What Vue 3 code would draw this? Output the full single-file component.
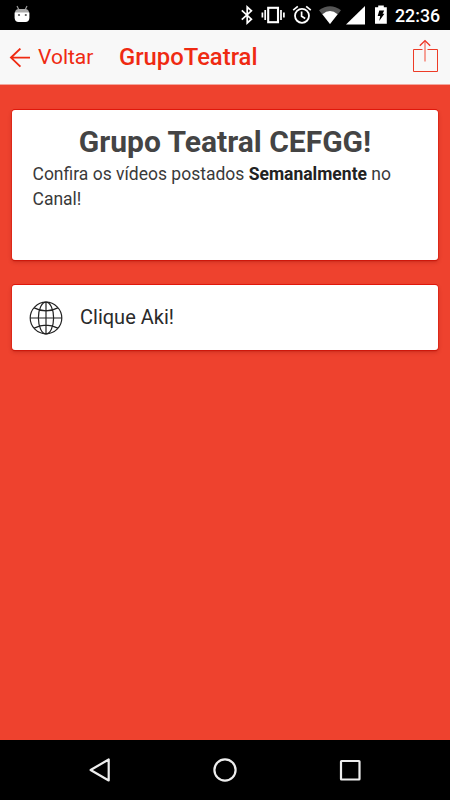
<template>
  <div class="phone">
    <div class="status-bar">
      <svg class="debug" width="16" height="18" viewBox="0 0 16 18">
        <path d="M3 1l2 4M13 1l-2 4" stroke="#999" stroke-width="1.2" />
        <path d="M1 8Q1 4 5 4H11Q15 4 15 8Z" fill="#aaa" />
        <path d="M.6 7.5H15.4V13Q15 17 11.5 17H4.5Q1 17 .6 13Z" fill="#fff" />
        <circle cx="5" cy="10" r="1.1" fill="#555" />
        <circle cx="11.8" cy="10" r="1.1" fill="#555" />
      </svg>
      <svg width="160" height="30" viewBox="230 0 160 30">
        <!-- bluetooth -->
        <path d="M241.8 10.3L251.4 19.2L247.2 23V7L251.4 10.8L241.8 19.7" fill="none" stroke="#fff" stroke-width="1.7" />
        <!-- vibrate -->
        <rect x="268.2" y="7.8" width="9.8" height="14.4" fill="none" stroke="#fff" stroke-width="2.1" />
        <path d="M265.2 10v10M281 10v10M262.4 12.5v5M283.9 12.5v5" stroke="#fff" stroke-width="1.7" />
        <!-- alarm -->
        <circle cx="302" cy="15.8" r="7" fill="none" stroke="#fff" stroke-width="1.8" />
        <path d="M293.2 10.2l4.6-3.8M310.8 10.2l-4.6-3.8M301.6 11.5v4.8l3.6 2.2" fill="none" stroke="#fff" stroke-width="1.7" />
        <!-- wifi -->
        <path d="M319 10.3Q330 2 341 10.3L330 24Z" fill="#555" />
        <path d="M322.4 14.2Q330 8 337.6 14.2L330 24Z" fill="#fff" />
        <!-- signal -->
        <path d="M346 24.5H365V6Z" fill="#fff" />
        <!-- battery -->
        <path d="M375 7.2H378.2V5.4H383.8V7.2H386.8V23.8H375Z" fill="#fff" />
        <path d="M379.3 10.6H384.2L382.6 13.8H384.4L379.2 21L380.2 16H377.7Z" fill="#000" />
      </svg>
      <span class="clock">22:36</span>
    </div>

    <header class="nav-bar">
      <svg class="back" width="22" height="20" viewBox="0 0 22 20">
        <path d="M21 9.6H1.8M11.4 .6L2 9.6L11.4 18.6" fill="none" stroke="#ef2a12" stroke-width="1.9" />
      </svg>
      <span class="back-label">Voltar</span>
      <h1 class="title">GrupoTeatral</h1>
      <svg class="share" width="26" height="34" viewBox="0 0 26 34">
        <path d="M10.5 10.5H1.5V32.5H25.5V10.5H15.5" fill="none" stroke="#ed3b27" />
        <path d="M13 22.5V2" fill="none" stroke="#f58a7d" stroke-width="1.6" />
        <path d="M7.8 6.8L13 1.6L18.2 6.8" fill="none" stroke="#ed3020" stroke-width="1.3" />
      </svg>
    </header>

    <main class="content">
      <section class="card intro">
        <h2>Grupo Teatral CEFGG!</h2>
        <p>
          <span>Confira os vídeos postados <b>Semanalmente</b> no</span>
          <span>Canal!</span>
        </p>
      </section>
      <section class="card link">
        <svg width="34" height="34" viewBox="0 0 34 34" fill="none" stroke="#222" stroke-width="1.2">
          <circle cx="17" cy="17" r="15.8" />
          <ellipse cx="17" cy="17" rx="7.6" ry="15.8" />
          <path d="M17 1.2V32.8M1.2 17H32.8M5.2 6.9Q17 13 28.8 6.9M5.2 27.1Q17 21 28.8 27.1" />
        </svg>
        <span>Clique Aki!</span>
      </section>
    </main>

    <footer class="system-nav">
      <svg width="26" height="26" viewBox="0 0 26 26">
        <path d="M21.7 2.5V23.5L3.6 13Z" />
      </svg>
      <svg width="26" height="26" viewBox="0 0 26 26">
        <circle cx="13" cy="13" r="10.6" />
      </svg>
      <svg width="26" height="26" viewBox="0 0 26 26">
        <rect x="4" y="4" width="18.5" height="18.5" rx="0.5" />
      </svg>
    </footer>
  </div>
</template>

<script setup>
</script>

<style>
body {
  margin: 0;
  background: #000;
}
</style>

<style scoped>
.phone {
  width: 450px;
  height: 800px;
  display: flex;
  flex-direction: column;
  overflow: hidden;
  font-family: Roboto, "Liberation Sans", sans-serif;
  background: #ee422e;
}

.phone svg {
  display: block;
  flex: none;
}

.status-bar {
  display: flex;
  height: 30px;
  background: #000;
}

.debug {
  margin: 5px 200px 0 14px;
}

.clock {
  margin-left: 5px;
  color: #fff;
  font-size: 17.8px;
  font-weight: 500;
  line-height: 31px;
  white-space: nowrap;
}

.nav-bar {
  display: flex;
  align-items: flex-start;
  box-sizing: border-box;
  height: 55px;
  background: #f8f8f8;
  border-bottom: 1px solid #f3a79e;
  color: #ef2a12;
  white-space: nowrap;
}

.back {
  margin: 18px 0 0 9px;
}

.back-label {
  width: 81px;
  padding-left: 7px;
  font-size: 21px;
  line-height: 54px;
}

.title {
  margin: 0;
  flex: 1;
  font-size: 23.8px;
  font-weight: 500;
  line-height: 55px;
}

.share {
  margin: 9px 12px 0 0;
}

.content {
  flex: 1;
  padding: 25px 12px 0;
}

.card {
  box-sizing: border-box;
  background: #fff;
  border-radius: 3px;
  box-shadow: 0 0 0 0.5px #e01a0e, 0 1px 1px #b81408, 0 -1px 0 #e01408, 0 2px 4px rgba(120, 0, 0, 0.3);
}

.intro {
  height: 150px;
  padding: 13px 20px 0;
}

h2 {
  margin: 0;
  color: #444;
  font-size: 30px;
  font-weight: 700;
  line-height: 37px;
  text-align: center;
  white-space: nowrap;
}

p {
  display: flex;
  flex-direction: column;
  margin: 0;
  padding: 2px 0 0 0.5px;
  color: #3a3a3a;
  font-size: 17.5px;
  line-height: 25px;
}

p b {
  color: #222;
}

.link {
  display: flex;
  align-items: center;
  height: 65px;
  margin-top: 25px;
  padding-left: 17px;
  color: #2a2a2a;
  font-size: 20px;
}

.link span {
  margin-left: 17px;
  padding-bottom: 2px;
}

.system-nav {
  display: flex;
  justify-content: space-between;
  align-items: center;
  box-sizing: border-box;
  height: 60px;
  padding: 0 87px;
  background: #000;
}

.system-nav svg {
  fill: none;
  stroke: #eee;
  stroke-width: 2.2;
  stroke-linejoin: round;
}
</style>
